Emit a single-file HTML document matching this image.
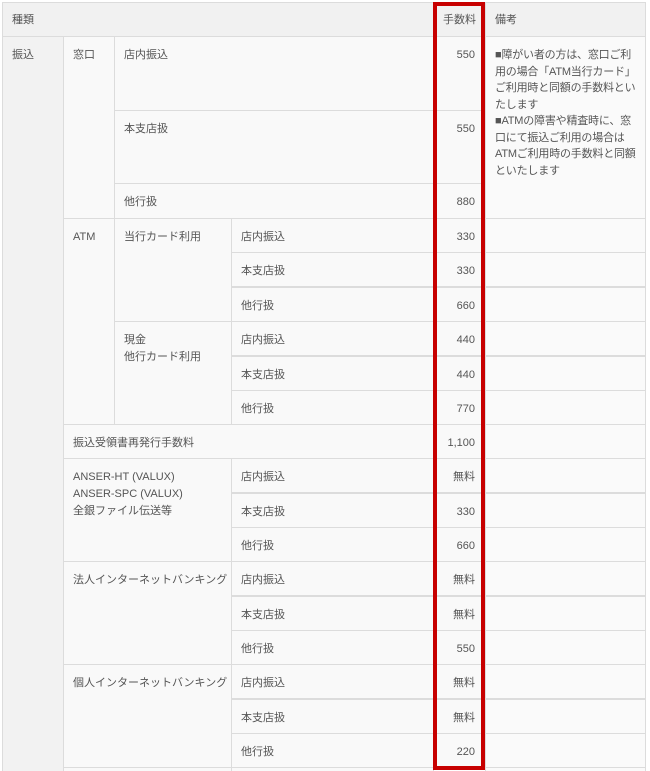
<!DOCTYPE html>
<html><head><meta charset="utf-8"><style>
html,body{margin:0;padding:0;background:#fff;width:650px;height:771px;overflow:hidden;position:relative}
.c{position:absolute;box-sizing:border-box;border:1px solid #dcdcdc;background:#f9f9f9;font-family:"Liberation Sans","Noto Sans CJK JP",sans-serif;font-size:11px;color:#555;padding:10px 9px 0 9px;line-height:17px;white-space:nowrap}
.h{background:#f1f1f1;padding-top:9px}
.g{background:#f2f2f2}
.r{text-align:right;padding-right:10px}
.n{background:#fafafa}
#red{position:absolute;left:433px;top:2px;width:52px;height:768px;box-sizing:border-box;border:4px solid #c70000}
</style></head><body>
<div class="c h" style="left:2px;top:2px;width:432px;height:35px">種類</div>
<div class="c h r" style="left:433px;top:2px;width:53px;height:35px">手数料</div>
<div class="c h" style="left:485px;top:2px;width:161px;height:35px">備考</div>
<div class="c g" style="left:2px;top:36px;width:62px;height:740px">振込</div>

<div class="c" style="left:63px;top:36px;width:52px;height:183px">窓口</div>
<div class="c" style="left:114px;top:36px;width:320px;height:75px">店内振込</div>
<div class="c r" style="left:433px;top:36px;width:53px;height:75px">550</div>
<div class="c" style="left:114px;top:110px;width:320px;height:74px">本支店扱</div>
<div class="c r" style="left:433px;top:110px;width:53px;height:74px">550</div>
<div class="c" style="left:114px;top:183px;width:320px;height:36px">他行扱</div>
<div class="c r" style="left:433px;top:183px;width:53px;height:36px">880</div>
<div class="c n" style="left:485px;top:36px;width:161px;height:183px;line-height:16.5px;letter-spacing:-0.2px">■障がい者の方は、窓口ご利<br>用の場合「ATM当行カード」<br>ご利用時と同額の手数料とい<br>たします<br>■ATMの障害や精査時に、窓<br>口にて振込ご利用の場合は<br>ATMご利用時の手数料と同額<br>といたします</div>

<div class="c" style="left:63px;top:218px;width:52px;height:207px">ATM</div>
<div class="c" style="left:114px;top:218px;width:118px;height:104px">当行カード利用</div>
<div class="c" style="left:114px;top:321px;width:118px;height:104px">現金<br>他行カード利用</div>

<div class="c" style="left:63px;top:424px;width:371px;height:35px">振込受領書再発行手数料</div>
<div class="c r" style="left:433px;top:424px;width:53px;height:35px">1,100</div>

<div class="c" style="left:63px;top:458px;width:169px;height:104px">ANSER-HT (VALUX)<br>ANSER-SPC (VALUX)<br>全銀ファイル伝送等</div>
<div class="c" style="left:63px;top:561px;width:169px;height:104px">法人インターネットバンキング</div>
<div class="c" style="left:63px;top:664px;width:169px;height:104px">個人インターネットバンキング</div>
<div class="c" style="left:63px;top:767px;width:169px;height:20px"></div>
<div class="c" style="left:231px;top:767px;width:203px;height:20px"></div>
<div class="c n" style="left:485px;top:767px;width:161px;height:20px"></div>

<div id="rows"></div>
<script>
var d=[[218,"店内振込","330"],[252,"本支店扱","330"],[287,"他行扱","660"],[321,"店内振込","440"],[356,"本支店扱","440"],[390,"他行扱","770"],[458,"店内振込","無料"],[493,"本支店扱","330"],[527,"他行扱","660"],[561,"店内振込","無料"],[596,"本支店扱","無料"],[630,"他行扱","550"],[664,"店内振込","無料"],[699,"本支店扱","無料"],[733,"他行扱","220"]];
var h="";
for(var i=0;i<d.length;i++){var y=d[i][0],ht=35;
h+='<div class="c" style="left:231px;top:'+y+'px;width:203px;height:'+ht+'px">'+d[i][1]+'</div>';
h+='<div class="c r" style="left:433px;top:'+y+'px;width:53px;height:'+ht+'px">'+d[i][2]+'</div>';
h+='<div class="c n" style="left:485px;top:'+y+'px;width:161px;height:'+ht+'px"></div>';}
h+='<div class="c n" style="left:485px;top:424px;width:161px;height:35px"></div>';
document.getElementById("rows").innerHTML=h;
</script>
<div id="red"></div>
</body></html>
